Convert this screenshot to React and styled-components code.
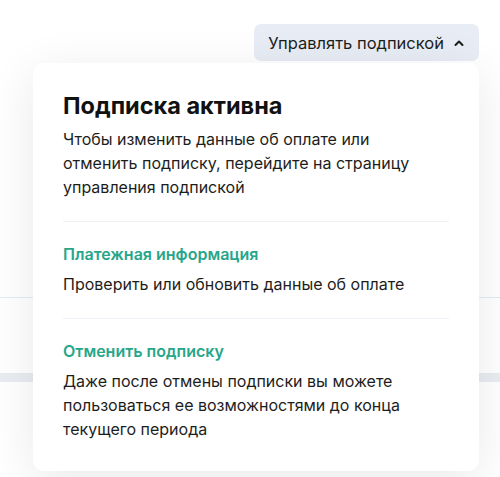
import React from "react";
import styled, { createGlobalStyle } from "styled-components";

const GlobalStyle = createGlobalStyle`
    html, body {
        margin: 0;
        padding: 0;
        background: #ffffff;
        font-family: Inter, "Noto Sans", sans-serif;
        color: #1d1d1b;
    }
`;

const Page = styled.div`
    position: relative;
    width: 500px;
    height: 477px;
    overflow: hidden;
    background: #ffffff;
`;

const Backdrop = styled.div`
    padding-top: 297px;
`;

const ThinRule = styled.div`
    height: 1px;
    background: #e4eaf2;
`;

const Band = styled.div`
    margin-top: 75px;
    height: 9px;
    background: #e9ecf1;
`;

const Toolbar = styled.div`
    position: absolute;
    top: 24px;
    right: 21px;
    display: flex;
`;

const ManageButton = styled.button`
    display: flex;
    align-items: center;
    gap: 9px;
    height: 37px;
    padding: 0 14px;
    border: none;
    border-radius: 7px;
    background: #e8edf5;
    font-family: Inter, "Noto Sans", sans-serif;
    font-size: 16.5px;
    color: #1d1d1b;
    cursor: pointer;
`;

const Popover = styled.div`
    position: absolute;
    top: 63px;
    left: 33px;
    width: 446px;
    box-sizing: border-box;
    padding: 28px 30px 30px;
    background: #ffffff;
    border-radius: 10px;
    box-shadow: 0 10px 50px rgba(0, 0, 0, 0.09);
`;

const Title = styled.h2`
    margin: 0 0 6px;
    font-size: 23.5px;
    font-weight: 700;
    line-height: 30px;
    color: #111111;
`;

const Text = styled.p`
    margin: 0;
    max-width: 370px;
    font-size: 16px;
    line-height: 24px;
    color: #1d1d1b;
`;

const Divider = styled.hr`
    margin: 22px 0 20px;
    border: none;
    height: 1px;
    background: #eef1f5;
`;

const Section = styled.div`
    display: flex;
    flex-direction: column;
    gap: 6px;
`;

const Link = styled.a`
    font-size: 16px;
    font-weight: 600;
    line-height: 24px;
    color: #27a68a;
    text-decoration: none;
    cursor: pointer;
`;

function Chevron() {
    return (
        <svg width="12" height="12" viewBox="0 0 12 12" fill="none">
            <path d="M2.5 8 L6 4.5 L9.5 8" stroke="#1d1d1b" strokeWidth="2" strokeLinecap="round" strokeLinejoin="round" />
        </svg>
    );
}

export default function App() {
    return (
        <Page>
            <GlobalStyle />
            <Backdrop>
                <ThinRule />
                <Band />
            </Backdrop>
            <Toolbar>
                <ManageButton>
                    Управлять подпиской
                    <Chevron />
                </ManageButton>
            </Toolbar>
            <Popover>
                <Title>Подписка активна</Title>
                <Text>
                    Чтобы изменить данные об оплате или отменить подписку, перейдите на страницу управления подпиской
                </Text>
                <Divider />
                <Section>
                    <Link>Платежная информация</Link>
                    <Text>Проверить или обновить данные об оплате</Text>
                </Section>
                <Divider />
                <Section>
                    <Link>Отменить подписку</Link>
                    <Text>Даже после отмены подписки вы можете пользоваться ее возможностями до конца текущего периода</Text>
                </Section>
            </Popover>
        </Page>
    );
}
